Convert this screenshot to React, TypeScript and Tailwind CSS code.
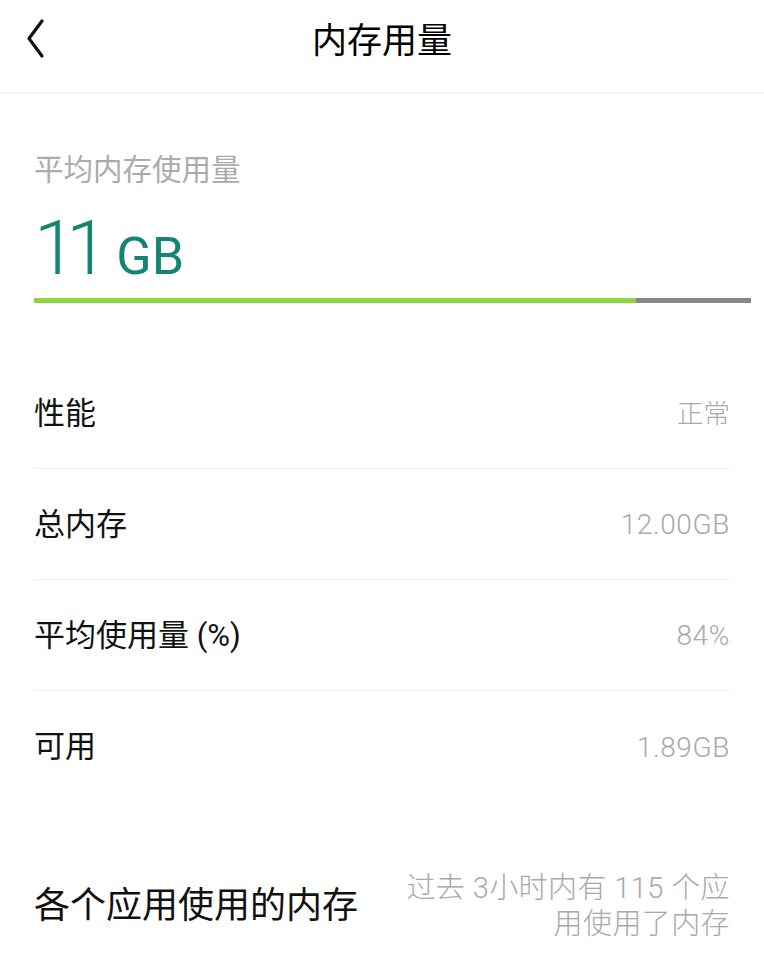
const font = { fontFamily: '"Roboto", "Noto Sans CJK SC", sans-serif' };

type Row = { label: string; value: string; latin?: boolean };

const rows: Row[] = [
    { label: "性能", value: "正常" },
    { label: "总内存", value: "12.00GB", latin: true },
    { label: "平均使用量 (%)", value: "84%", latin: true },
    { label: "可用", value: "1.89GB", latin: true },
];

export default function App() {
    const used = 84;

    return (
        <div className="w-[764px] h-[960px] bg-white overflow-hidden" style={font}>
            <header className="relative h-[94px] flex items-center justify-center border-b-2 border-[#f4f4f4]">
                <button className="absolute left-[26px] top-[18px] p-0">
                    <svg width="20" height="42" viewBox="0 0 20 42" fill="none">
                        <path d="M16 3 L3 20.5 L16 38" stroke="#111" strokeWidth="3.2" strokeLinecap="round" strokeLinejoin="round" />
                    </svg>
                </button>
                <h1 className="text-[35px] leading-none text-black -mt-[10px]">内存用量</h1>
            </header>

            <section className="pl-[34px] pr-[13px] pt-[62px]">
                <p className="text-[29.5px] leading-none text-[#ababab]">平均内存使用量</p>
                <div className="flex items-baseline mt-[24px] text-[#138572]">
                    <span className="text-[76px] leading-none tracking-[-10px] font-light">11</span>
                    <span className="text-[52px] leading-none ml-[18px]">GB</span>
                </div>
                <div className="mt-[12px] h-[5px] flex bg-[#878787]">
                    <div className="h-full bg-[#8fd43d]" style={{ width: `${used}%` }} />
                </div>
            </section>

            <section className="px-[34px] mt-[55px]">
                {rows.map((r, i) => (
                    <div
                        key={r.label}
                        className={`h-[111px] pt-[3px] flex items-center justify-between ${i < rows.length - 1 ? "border-b border-[#f1f1f1]" : ""}`}
                    >
                        <span className="text-[31px] text-[#111]">{r.label}</span>
                        <span
                            className={`${r.latin ? "text-[28px] tracking-[0.6px]" : "text-[26.5px]"} font-light text-[#a9a9a9]`}
                        >
                            {r.value}
                        </span>
                    </div>
                ))}
            </section>

            <section className="px-[34px] mt-[68px] flex items-center justify-between">
                <span className="text-[36px] text-[#111] whitespace-nowrap">各个应用使用的内存</span>
                <span className="w-[330px] text-right text-[29px] leading-[36px] tracking-[0.4px] font-light text-[#a9a9a9]">
                    过去 3小时内有 115 个应用使用了内存
                </span>
            </section>
        </div>
    );
}
